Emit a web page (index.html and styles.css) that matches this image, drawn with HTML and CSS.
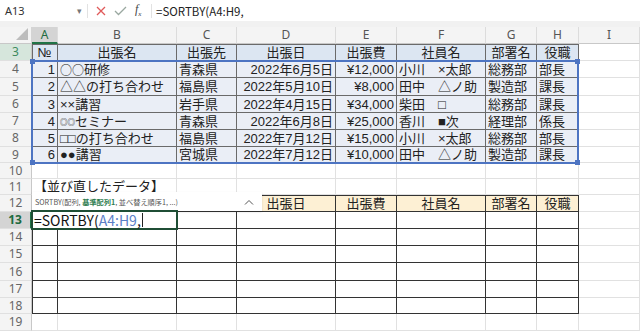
FILE: index.html
```html
<!DOCTYPE html>
<html lang="ja">
<head>
    <meta charset="UTF-8">
    <title>SORTBY</title>
    <link rel="stylesheet" href="styles.css">
</head>
<body>
    <div class="formula-bar">
        <div class="namebox"><span>A13</span><span class="nb-caret">&#9662;</span></div>
        <div class="fb-icons">
            <svg width="10" height="10" viewBox="0 0 10 10"><path d="M1 1L9 9M9 1L1 9" stroke="#e05a5a" stroke-width="1.3" fill="none"/></svg>
            <svg width="13" height="10" viewBox="0 0 13 10"><path d="M1 5L4.5 8.5L12 1" stroke="#9aa8a0" stroke-width="1.3" fill="none"/></svg>
            <span class="fx">f<sub>x</sub></span>
        </div>
        <div class="fb-input">=SORTBY(A4:H9,</div>
    </div>
    <div class="band"></div>

    <div class="sheet">
        <div class="row colhead">
            <div class="corner"><svg width="12" height="12" viewBox="0 0 12 12"><path d="M12 0V12H0Z" fill="#bdbdbd"/></svg></div>
            <div class="ch sel">A</div><div class="ch">B</div><div class="ch">C</div><div class="ch">D</div><div class="ch">E</div><div class="ch">F</div><div class="ch">G</div><div class="ch">H</div><div class="ch">I</div>
        </div>

        <div class="row">
            <div class="rh rh-green">3</div>
            <div class="c t1 th first top">№</div><div class="c t1 th top">出張名</div><div class="c t1 th top">出張先</div><div class="c t1 th top">出張日</div><div class="c t1 th top">出張費</div><div class="c t1 th top">社員名</div><div class="c t1 th top">部署名</div><div class="c t1 th top">役職</div><div class="c"></div>
        </div>
        <div class="row">
            <div class="rh">4</div>
            <div class="c t1 first r">1</div><div class="c t1"><span class="wide">○○</span>研修</div><div class="c t1">青森県</div><div class="c t1 r">2022年6月5日</div><div class="c t1 r">¥12,000</div><div class="c t1">小川　×太郎</div><div class="c t1">総務部</div><div class="c t1">部長</div><div class="c"></div>
        </div>
        <div class="row h18">
            <div class="rh">5</div>
            <div class="c t1 first r">2</div><div class="c t1">△△の打ち合わせ</div><div class="c t1">福島県</div><div class="c t1 r">2022年5月10日</div><div class="c t1 r">¥8,000</div><div class="c t1">田中　△ノ助</div><div class="c t1">製造部</div><div class="c t1">課長</div><div class="c"></div>
        </div>
        <div class="row">
            <div class="rh">6</div>
            <div class="c t1 first r">3</div><div class="c t1">××講習</div><div class="c t1">岩手県</div><div class="c t1 r">2022年4月15日</div><div class="c t1 r">¥34,000</div><div class="c t1">柴田　□</div><div class="c t1">総務部</div><div class="c t1">課長</div><div class="c"></div>
        </div>
        <div class="row">
            <div class="rh">7</div>
            <div class="c t1 first r">4</div><div class="c t1"><span class="sym">◎◎</span>セミナー</div><div class="c t1">青森県</div><div class="c t1 r">2022年6月8日</div><div class="c t1 r">¥25,000</div><div class="c t1">香川　■次</div><div class="c t1">経理部</div><div class="c t1">係長</div><div class="c"></div>
        </div>
        <div class="row">
            <div class="rh">8</div>
            <div class="c t1 first r">5</div><div class="c t1">□□の打ち合わせ</div><div class="c t1">福島県</div><div class="c t1 r">2022年7月12日</div><div class="c t1 r">¥15,000</div><div class="c t1">小川　×太郎</div><div class="c t1">総務部</div><div class="c t1">部長</div><div class="c"></div>
        </div>
        <div class="row h16">
            <div class="rh">9</div>
            <div class="c t1 first r">6</div><div class="c t1">●●講習</div><div class="c t1">宮城県</div><div class="c t1 r">2022年7月12日</div><div class="c t1 r">¥10,000</div><div class="c t1">田中　△ノ助</div><div class="c t1">製造部</div><div class="c t1">課長</div><div class="c"></div>
        </div>
        <div class="row h16">
            <div class="rh">10</div>
            <div class="c"></div><div class="c"></div><div class="c"></div><div class="c"></div><div class="c"></div><div class="c"></div><div class="c"></div><div class="c"></div><div class="c"></div>
        </div>
        <div class="row h16">
            <div class="rh">11</div>
            <div class="c span2">【並び直したデータ】</div><div class="c"></div><div class="c"></div><div class="c"></div><div class="c"></div><div class="c"></div><div class="c"></div><div class="c"></div>
        </div>
        <div class="row">
            <div class="rh">12</div>
            <div class="c t2 th2 first top"></div><div class="c t2 th2 top"></div><div class="c t2 th2 top"></div><div class="c t2 th2 top">出張日</div><div class="c t2 th2 top">出張費</div><div class="c t2 th2 top">社員名</div><div class="c t2 th2 top">部署名</div><div class="c t2 th2 top">役職</div><div class="c"></div>
        </div>
        <div class="row">
            <div class="rh rh-sel">13</div>
            <div class="c t2 first"></div><div class="c t2"></div><div class="c t2"></div><div class="c t2"></div><div class="c t2"></div><div class="c t2"></div><div class="c t2"></div><div class="c t2"></div><div class="c"></div>
        </div>
        <div class="row">
            <div class="rh">14</div>
            <div class="c t2 first"></div><div class="c t2"></div><div class="c t2"></div><div class="c t2"></div><div class="c t2"></div><div class="c t2"></div><div class="c t2"></div><div class="c t2"></div><div class="c"></div>
        </div>
        <div class="row">
            <div class="rh">15</div>
            <div class="c t2 first"></div><div class="c t2"></div><div class="c t2"></div><div class="c t2"></div><div class="c t2"></div><div class="c t2"></div><div class="c t2"></div><div class="c t2"></div><div class="c"></div>
        </div>
        <div class="row h18">
            <div class="rh">16</div>
            <div class="c t2 first"></div><div class="c t2"></div><div class="c t2"></div><div class="c t2"></div><div class="c t2"></div><div class="c t2"></div><div class="c t2"></div><div class="c t2"></div><div class="c"></div>
        </div>
        <div class="row">
            <div class="rh">17</div>
            <div class="c t2 first"></div><div class="c t2"></div><div class="c t2"></div><div class="c t2"></div><div class="c t2"></div><div class="c t2"></div><div class="c t2"></div><div class="c t2"></div><div class="c"></div>
        </div>
        <div class="row h16">
            <div class="rh">18</div>
            <div class="c t2 first"></div><div class="c t2"></div><div class="c t2"></div><div class="c t2"></div><div class="c t2"></div><div class="c t2"></div><div class="c t2"></div><div class="c t2"></div><div class="c"></div>
        </div>
        <div class="row">
            <div class="rh">19</div>
            <div class="c"></div><div class="c"></div><div class="c"></div><div class="c"></div><div class="c"></div><div class="c"></div><div class="c"></div><div class="c"></div><div class="c"></div>
        </div>

        <!-- reference highlight for A4:H9 -->
        <div class="range">
            <span class="handle tl"></span><span class="handle tr"></span><span class="handle bl"></span><span class="handle br"></span>
        </div>

        <div class="tip">
            <span>SORTBY(配列, <b>基準配列1</b>, 並べ替え順序1, ...)</span>
            <svg width="10" height="6" viewBox="0 0 10 6"><path d="M1 5.5L5 1.5L9 5.5" stroke="#555" stroke-width="1" fill="none"/></svg>
        </div>

        <div class="editor">=SORTBY(<span class="ref">A4:H9</span>,<span class="cursor"></span></div>
    </div>
</body>
</html>
```

FILE: styles.css
```css
body {
    margin: 0;
    width: 640px;
    height: 331px;
    overflow: hidden;
    background: #fff;
    font-family: "Noto Sans CJK JP", "Noto Sans", sans-serif;
    color: #222;
}

/* formula bar */
.formula-bar {
    display: flex;
    align-items: center;
    height: 21px;
    background: #fff;
}
.namebox {
    width: 88px;
    box-sizing: border-box;
    display: flex;
    justify-content: space-between;
    align-items: center;
    padding: 0 5px 0 5px;
    font-family: "Noto Sans", sans-serif;
    font-size: 11px;
    color: #333;
    border-right: 1px solid #e2e2e2;
    height: 14px;
}
.nb-caret {
    font-size: 9px;
    color: #777;
}
.fb-icons {
    width: 64px;
    box-sizing: border-box;
    display: flex;
    align-items: center;
    gap: 8px;
    padding-left: 8px;
    height: 14px;
    border-right: 1px solid #e2e2e2;
}
.fx {
    font-family: "Liberation Serif", serif;
    font-style: italic;
    font-size: 12px;
    color: #444;
}
.fx sub {
    font-size: 7px;
}
.fb-input {
    padding-left: 4px;
    font-size: 11.5px;
    color: #222;
}
.band {
    height: 6px;
    background: #f1f1f1;
}

/* grid */
.sheet {
    position: relative;
}
.row {
    display: grid;
    grid-template-columns: 32px 26px 119px 60px 99px 61px 89px 51px 42px 1fr;
    grid-template-rows: minmax(0, 1fr);
    height: 17px;
}
.row.h16 { height: 16px; }
.row.h18 { height: 18px; }

.colhead {
    background: #f4f4f4;
}
.corner {
    display: flex;
    align-items: flex-end;
    justify-content: flex-end;
    padding: 0 3px 3px 0;
    border-right: 1px solid #d4d4d4;
    border-bottom: 1px solid #c8c8c8;
    box-sizing: border-box;
}
.ch {
    display: flex;
    align-items: center;
    justify-content: center;
    font-family: "Noto Sans", sans-serif;
    font-size: 12px;
    line-height: 14px;
    color: #555;
    border-right: 1px solid #dcdcdc;
    border-bottom: 1px solid #c8c8c8;
    box-sizing: border-box;
}
.ch.sel {
    background: #d4d4d4;
    color: #1d6b40;
    border-bottom: 2px solid #217346;
}
.rh {
    display: flex;
    align-items: center;
    justify-content: center;
    background: #f4f4f4;
    font-family: "Noto Sans", sans-serif;
    font-size: 12px;
    line-height: 14px;
    color: #666;
    border-right: 1px solid #c8c8c8;
    border-bottom: 1px solid #e0e0e0;
    box-sizing: border-box;
}
.rh-green {
    background: #d6e6dc;
    color: #3d8a5e;
}
.rh-sel {
    background: #d4d4d4;
    color: #1d6b40;
    font-weight: bold;
    border-right: 2px solid #217346;
}

.c {
    display: flex;
    align-items: center;
    padding: 0 2px;
    font-family: "Liberation Sans", "Noto Sans CJK JP", sans-serif;
    font-size: 13px;
    line-height: 15px;
    white-space: nowrap;
    border-right: 1px solid #e1e1e1;
    border-bottom: 1px solid #e1e1e1;
    box-sizing: border-box;
}
.c.r { justify-content: flex-end; }
.c.span2 {
    grid-column: span 2;
    padding-left: 2px;
}

.t1 {
    background: #eaeef6;
    border-color: #6a6a6a;
}
.t1.th {
    background: #dce6f2;
    justify-content: center;
}
.t2 {
    border-color: #333;
}
.t2.th2 {
    background: #fdf0d4;
    justify-content: center;
}
.t1.first { box-shadow: inset 1px 0 #6a6a6a; }
.t1.top { box-shadow: inset 0 1px #6a6a6a; }
.t1.first.top { box-shadow: inset 1px 1px #6a6a6a; }
.t2.first { box-shadow: inset 1px 0 #333; }
.t2.top { box-shadow: inset 0 1px #333; }
.t2.first.top { box-shadow: inset 1px 1px #333; }

.wide {
    font-family: "Noto Sans CJK JP", sans-serif;
    font-size: 12px;
}
.sym {
    font-family: "Noto Sans CJK JP", sans-serif;
    font-size: 7.5px;
}

/* overlays */
.range {
    position: absolute;
    left: 31px;
    top: 33px;
    width: 548px;
    height: 104px;
    border: 2px solid #4d74c2;
    box-sizing: border-box;
}
.handle {
    position: absolute;
    width: 5px;
    height: 5px;
    background: #4d74c2;
}
.handle.tl { left: -3px; top: -3px; }
.handle.tr { right: -3px; top: -3px; }
.handle.bl { left: -3px; bottom: -3px; }
.handle.br { right: -3px; bottom: -3px; }

.tip {
    position: absolute;
    left: 32px;
    top: 165px;
    width: 230px;
    height: 19px;
    box-sizing: border-box;
    display: flex;
    align-items: center;
    justify-content: space-between;
    padding: 0 8px 0 3px;
    background: #fff;
    box-shadow: 0 1px 2px rgba(0, 0, 0, 0.12);
    font-size: 7.2px;
    color: #555;
}
.tip b {
    color: #2f7d4f;
    font-weight: bold;
}

.editor {
    position: absolute;
    left: 31px;
    top: 183px;
    width: 147px;
    height: 20px;
    box-sizing: border-box;
    border: 2px solid #1f4e35;
    background: #fff;
    display: flex;
    align-items: center;
    padding-left: 1px;
    font-size: 14px;
    line-height: 16px;
    color: #111;
    white-space: nowrap;
}
.editor .ref {
    color: #5b7fc7;
}
.cursor {
    display: inline-block;
    width: 1px;
    height: 14px;
    background: #222;
    margin-left: 1px;
}
```
